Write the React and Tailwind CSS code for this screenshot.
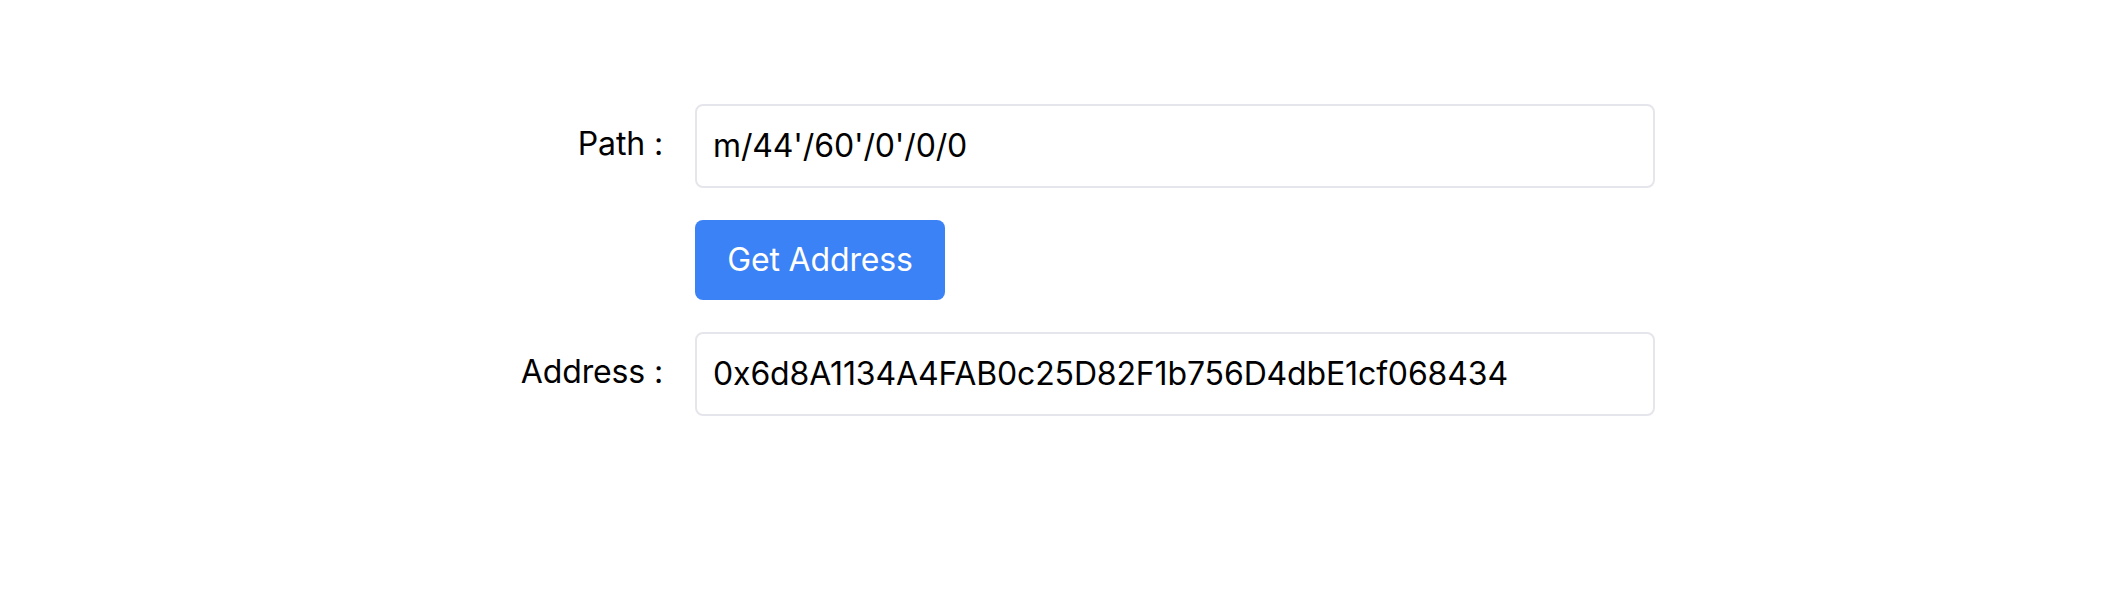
export default function App() {
  return (
    <main className="flex h-[596px] w-[2118px] flex-col bg-white pt-[104px] pl-[463px] font-['Inter',sans-serif] text-[32px] leading-[48px] tracking-[-0.14px] text-black">
      <div className="grid grid-cols-[200px_960px] items-start gap-x-8 gap-y-8">
        <label className="pt-4 text-right">Path :</label>
        <input className="h-[84px] rounded-lg border-2 border-[#e5e6eb] bg-white px-4 pb-px outline-none" defaultValue="m/44'/60'/0'/0/0" />
        <button className="col-start-2 h-20 w-[250px] rounded-lg bg-[#3b82f6] text-white">Get Address</button>
        <label className="pt-4 text-right">Address :</label>
        <input className="h-[84px] rounded-lg border-2 border-[#e5e6eb] bg-white px-4 pb-px outline-none" defaultValue="0x6d8A1134A4FAB0c25D82F1b756D4dbE1cf068434" />
      </div>
    </main>
  );
}
